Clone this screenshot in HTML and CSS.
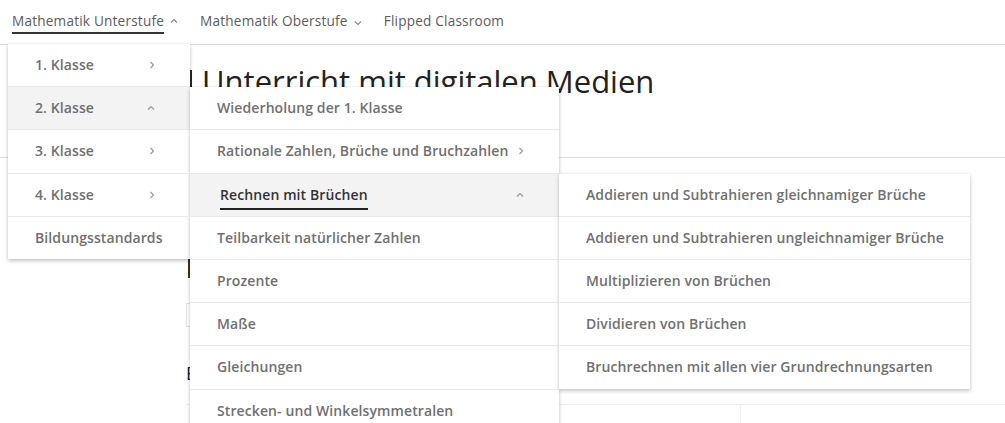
FILE: index.html
```html
<!DOCTYPE html>
<html lang="de">
<head>
<meta charset="utf-8">
<title>Unterricht mit digitalen Medien</title>
<link rel="stylesheet" href="styles.css">
</head>
<body>
<nav class="topbar">
  <ul class="nav-list">
    <li class="nav-item">
      <span class="nav-label is-active">Mathematik Unterstufe</span>
      <svg class="nav-chev nav-chev-up" width="8" height="6" viewBox="0 0 8 6"><polyline points="1,4.5 4,1.5 7,4.5"/></svg>
      <ul class="menu menu-l1">
        <li class="menu-item">
          <div class="row"><span class="row-label">1. Klasse</span><svg class="chev" width="6" height="8" viewBox="0 0 6 8"><polyline points="1.5,1 4.5,4 1.5,7"/></svg></div>
        </li>
        <li class="menu-item is-open">
          <div class="row"><span class="row-label">2. Klasse</span><svg class="chev" width="8" height="6" viewBox="0 0 8 6"><polyline points="1,4.5 4,1.5 7,4.5"/></svg></div>
          <ul class="menu menu-l2">
            <li class="menu-item"><div class="row"><span class="row-label">Wiederholung der 1. Klasse</span></div></li>
            <li class="menu-item"><div class="row"><span class="row-label">Rationale Zahlen, Brüche und Bruchzahlen</span><svg class="chev" width="6" height="8" viewBox="0 0 6 8"><polyline points="1.5,1 4.5,4 1.5,7"/></svg></div></li>
            <li class="menu-item is-open">
              <div class="row row-active"><span class="row-label active-label">Rechnen mit Brüchen</span><svg class="chev" width="8" height="6" viewBox="0 0 8 6"><polyline points="1,4.5 4,1.5 7,4.5"/></svg></div>
              <ul class="menu menu-l3">
                <li class="menu-item"><div class="row"><span class="row-label">Addieren und Subtrahieren gleichnamiger Brüche</span></div></li>
                <li class="menu-item"><div class="row"><span class="row-label">Addieren und Subtrahieren ungleichnamiger Brüche</span></div></li>
                <li class="menu-item"><div class="row"><span class="row-label">Multiplizieren von Brüchen</span></div></li>
                <li class="menu-item"><div class="row"><span class="row-label">Dividieren von Brüchen</span></div></li>
                <li class="menu-item"><div class="row"><span class="row-label">Bruchrechnen mit allen vier Grundrechnungsarten</span></div></li>
              </ul>
            </li>
            <li class="menu-item"><div class="row"><span class="row-label">Teilbarkeit natürlicher Zahlen</span></div></li>
            <li class="menu-item"><div class="row"><span class="row-label">Prozente</span></div></li>
            <li class="menu-item"><div class="row"><span class="row-label">Maße</span></div></li>
            <li class="menu-item"><div class="row"><span class="row-label">Gleichungen</span></div></li>
            <li class="menu-item"><div class="row"><span class="row-label">Strecken- und Winkelsymmetralen</span></div></li>
          </ul>
        </li>
        <li class="menu-item">
          <div class="row"><span class="row-label">3. Klasse</span><svg class="chev" width="6" height="8" viewBox="0 0 6 8"><polyline points="1.5,1 4.5,4 1.5,7"/></svg></div>
        </li>
        <li class="menu-item">
          <div class="row"><span class="row-label">4. Klasse</span><svg class="chev" width="6" height="8" viewBox="0 0 6 8"><polyline points="1.5,1 4.5,4 1.5,7"/></svg></div>
        </li>
        <li class="menu-item">
          <div class="row"><span class="row-label">Bildungsstandards</span></div>
        </li>
      </ul>
    </li>
    <li class="nav-item">
      <span class="nav-label">Mathematik Oberstufe</span>
      <svg class="nav-chev nav-chev-down" width="8" height="6" viewBox="0 0 8 6"><polyline points="1,1.5 4,4.5 7,1.5"/></svg>
    </li>
    <li class="nav-item">
      <span class="nav-label">Flipped Classroom</span>
    </li>
  </ul>
</nav>

<header class="page-header">
  <h1 class="page-title"><span class="title-bar"></span>Unterricht mit digitalen Medien</h1>
</header>

<main class="content">
  <div class="feature-img"></div>
  <div class="search-box"></div>
  <p class="intro">Einführung in den Unterricht mit digitalen Medien</p>
  <div class="cards">
    <div class="card"></div>
    <div class="card"></div>
  </div>
</main>
</body>
</html>
```
FILE: styles.css
```css
html, body {
  margin: 0;
  padding: 0;
  overflow: hidden;
  height: 100%;
  background: #fff;
}

body {
  font-family: "Open Sans", "Liberation Sans", sans-serif;
  color: #222;
}

ul {
  list-style: none;
  margin: 0;
  padding: 0;
}

/* ---------- top navigation ---------- */
.topbar {
  height: 44px;
  border-bottom: 1px solid #dcdcdc;
  position: relative;
  z-index: 10;
}

.nav-list {
  display: flex;
  gap: 22px;
  padding-left: 12px;
  height: 44px;
}

.nav-item {
  position: relative;
  display: flex;
  align-items: flex-start;
  padding-top: 11px;
  box-sizing: border-box;
  height: 44px;
}

.nav-label {
  display: inline-block;
  font-size: 13.6px;
  line-height: 20px;
  color: #5c5c5c;
  letter-spacing: 0.2px;
  padding-bottom: 1px;
  border-bottom: 2px solid transparent;
}

.nav-label.is-active {
  border-bottom-color: #333;
}

.nav-chev {
  margin-left: 6px;
  fill: none;
  stroke: #888;
  stroke-width: 1.1;
}

.nav-chev-up { margin-top: 7px; }
.nav-chev-down { margin-top: 9px; }

/* ---------- dropdown menus ---------- */
.menu {
  position: absolute;
  background: #fff;
  box-shadow: 0 2px 4px rgba(0, 0, 0, 0.22), 0 0 2px rgba(0, 0, 0, 0.08);
}

.menu-l1 {
  top: 44px;
  left: -4px;
  width: 182px;
}

.menu-l2 {
  top: 0;
  left: 100%;
  width: 369px;
}

.menu-l3 {
  top: 0;
  left: 100%;
  width: 411px;
}

.menu-item {
  position: relative;
  border-bottom: 1px solid #e9e9e9;
}

.menu-item:last-child {
  border-bottom: none;
}

.row {
  height: 42.2px;
  display: flex;
  align-items: center;
  justify-content: space-between;
  padding: 0 35px 0 27px;
}

.menu-item.is-open > .row {
  background: #f3f3f3;
}

.row-label {
  font-size: 14px;
  font-weight: 600;
  line-height: 20px;
  color: #707070;
  letter-spacing: 0.1px;
  white-space: nowrap;
}

.row-active {
  padding-left: 30px;
}

.active-label {
  color: #333;
  padding: 5px 0 3px;
  border-bottom: 2px solid #222;
}

.chev {
  fill: none;
  stroke: #9a9a9a;
  stroke-width: 1.2;
  flex: none;
}

/* ---------- page header ---------- */
.page-header {
  height: 113px;
  box-sizing: border-box;
  border-bottom: 1px solid #dedede;
  padding: 18px 0 0 190px;
}

.page-title {
  margin: 0;
  font-size: 31px;
  font-weight: 400;
  line-height: 37px;
  color: #222;
  white-space: nowrap;
}

.title-bar {
  display: inline-block;
  width: 2px;
  height: 23px;
  background: #1f2a33;
  margin-right: 10px;
}

/* ---------- page content (mostly hidden) ---------- */
.content {
  padding: 30px 0 0 186px;
}

.feature-img {
  margin-left: 2px;
  width: 330px;
  height: 90px;
  background: #4a2f1c;
}

.search-box {
  margin-top: 25px;
  width: 320px;
  height: 24px;
  box-sizing: border-box;
  border: 1px solid #e2e2e2;
}

.intro {
  margin: 34px 0 0;
  font-size: 18px;
  line-height: 24px;
  color: #222;
  white-space: nowrap;
}

.cards {
  margin-top: 19px;
  display: grid;
  grid-template-columns: 554px 1fr;
  border-top: 1px solid #ededed;
  height: 60px;
}

.card + .card {
  border-left: 1px solid #ededed;
}
```
